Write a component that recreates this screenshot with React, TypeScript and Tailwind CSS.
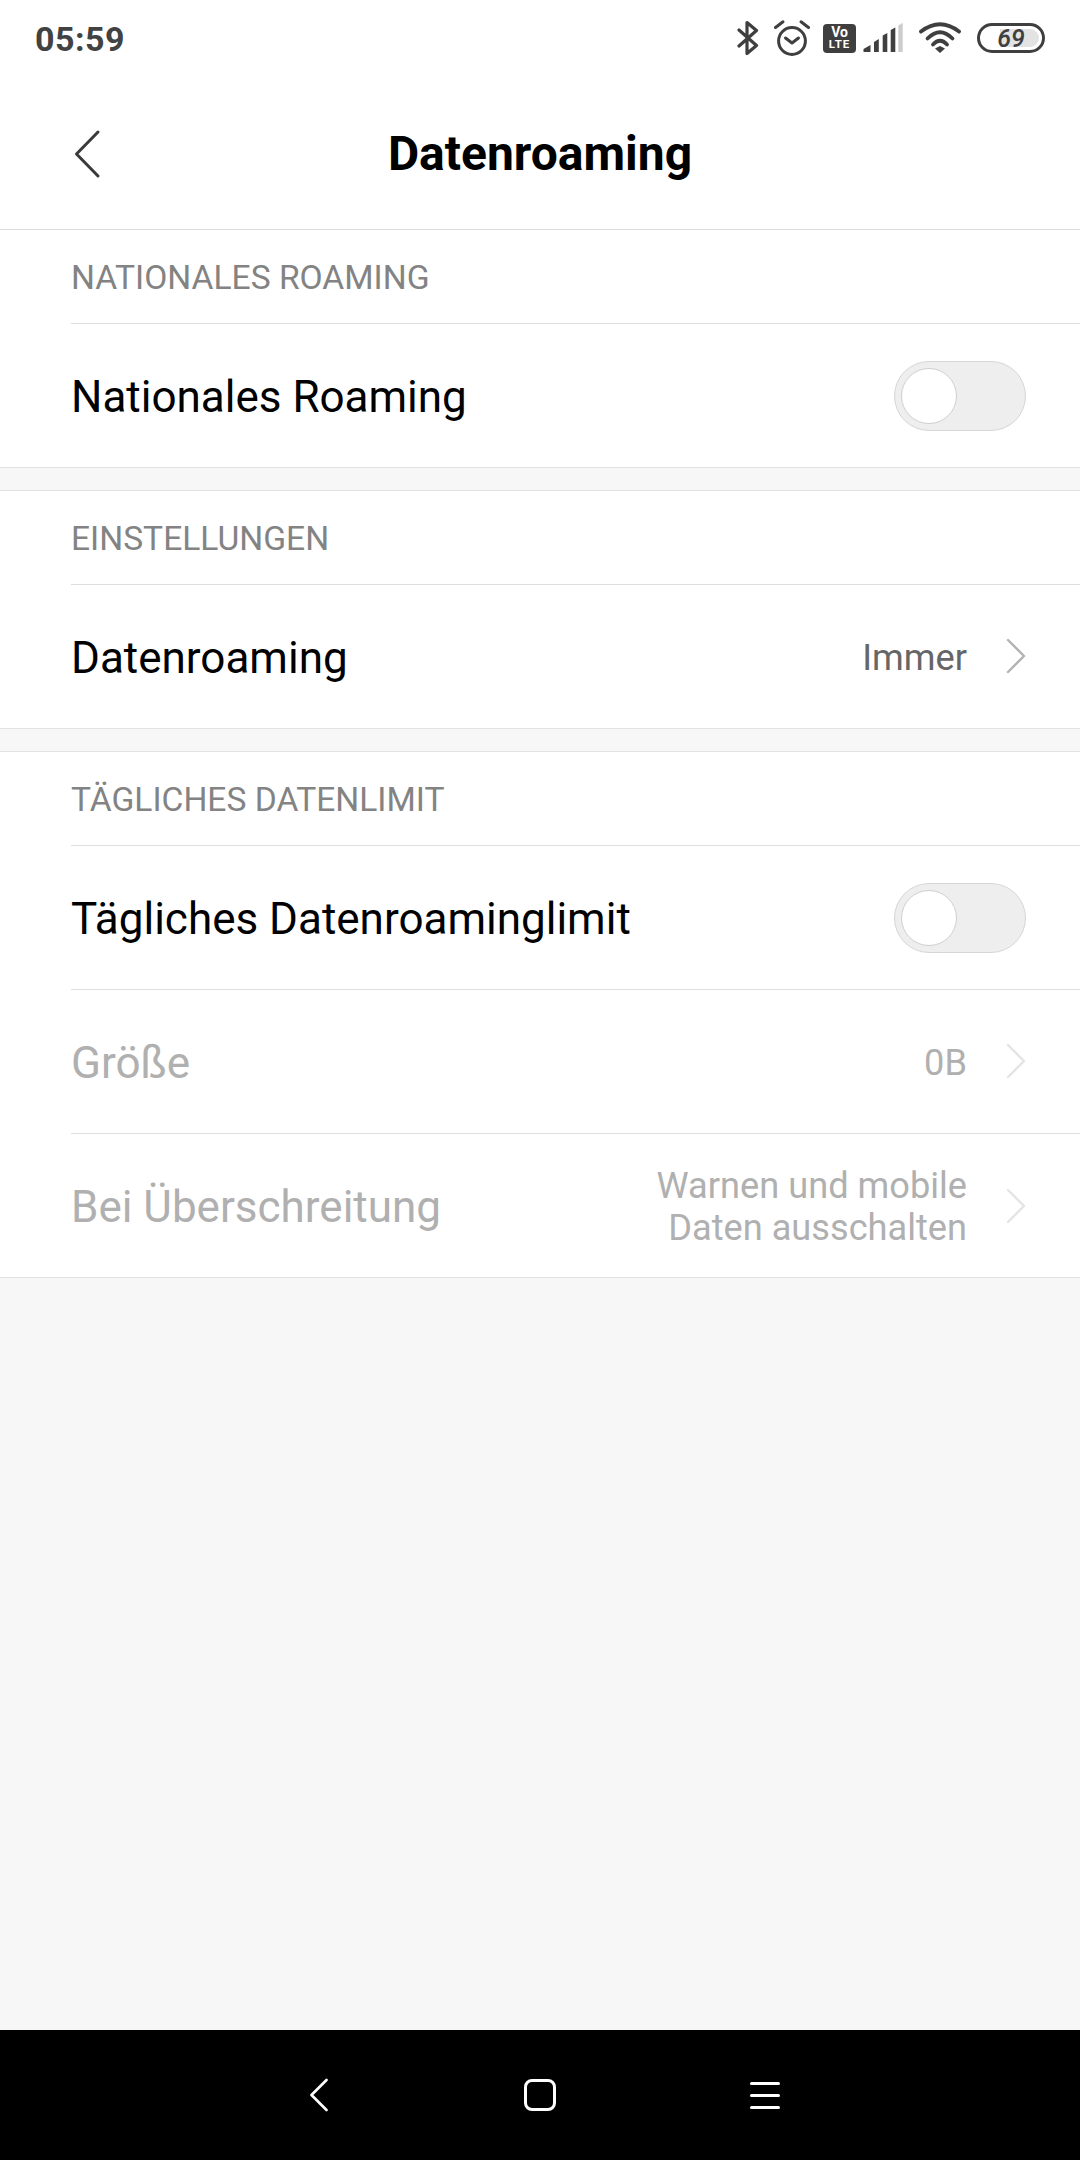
import React from 'react';

function Chevron({ color }: { color: string }) {
  return (
    <svg width="20" height="36" viewBox="0 0 20 36" fill="none" className="ml-[39px] shrink-0">
      <path d="M2 2 L18 18 L2 34" stroke={color} strokeWidth="2.4" strokeLinecap="round" strokeLinejoin="round" />
    </svg>
  );
}

function Toggle() {
  return (
    <div className="w-[132px] h-[70px] mt-[1px] rounded-full bg-[#eeeeee] border border-[#d6d6d6] flex items-center pl-[6px]">
      <div className="w-[56px] h-[56px] rounded-full bg-white border border-[#cfcfcf]" />
    </div>
  );
}

function SectionHeader({ text }: { text: string }) {
  return (
    <div className="h-[94px] ml-[71px] border-b border-[#dedede] flex items-center pt-[4px] text-[33.6px] text-[#838383]">
      {text}
    </div>
  );
}

function Row({
  title,
  disabled,
  last,
  children,
}: {
  title: string;
  disabled?: boolean;
  last?: boolean;
  children: React.ReactNode;
}) {
  return (
    <div className={last ? 'h-[143px] ml-[71px] flex items-center justify-between pr-[54px]' : 'h-[144px] ml-[71px] border-b border-[#dedede] flex items-center justify-between pr-[54px]'}>
      <span className={disabled ? 'pt-[3px] text-[44px] text-[#b0b0b0]' : 'pt-[3px] text-[44px] text-black'}>{title}</span>
      <div className="flex items-center">{children}</div>
    </div>
  );
}

function StatusIcons() {
  return (
    <div className="flex items-center">
      {/* bluetooth */}
      <svg width="22" height="36" viewBox="0 0 22 36" fill="none" className="mr-[15px]">
        <path d="M2 10 L19.5 25.5 L10 33.5 V2.5 L19.5 10.5 L2 26" stroke="#3f3f3f" strokeWidth="3.2" strokeLinecap="round" strokeLinejoin="round" />
      </svg>
      {/* alarm */}
      <svg width="36" height="36" viewBox="0 0 36 36" fill="none" className="mr-[13px]">
        <circle cx="18" cy="21" r="13.4" stroke="#3f3f3f" strokeWidth="3" />
        <path d="M11.5 18 L18 23 L24.5 18" stroke="#3f3f3f" strokeWidth="3" strokeLinecap="round" strokeLinejoin="round" />
        <path d="M1.5 7.5 L9 1.8 M34.5 7.5 L27 1.8" stroke="#3f3f3f" strokeWidth="3" strokeLinecap="round" />
      </svg>
      {/* volte */}
      <div className="w-[33px] h-[29px] rounded-[4px] bg-[#3f3f3f] flex flex-col items-center justify-center text-white font-bold mr-[7px]">
        <span className="text-[14px] leading-[13px]">Vo</span>
        <span className="text-[11.5px] leading-[11px] tracking-[1px]">LTE</span>
      </div>
      {/* signal */}
      <svg width="40" height="30" viewBox="0 0 40 30" className="mr-[16px]">
        <path d="M0.5 29 V26 L7.5 22 V29 Z" fill="#3f3f3f" />
        <path d="M11 29 V19 L15.8 16 V29 Z" fill="#3f3f3f" />
        <path d="M19.7 29 V12.5 L24.3 10 V29 Z" fill="#3f3f3f" />
        <path d="M27.7 29 V7 L32.3 4.5 V29 Z" fill="#3f3f3f" />
        <path d="M35.3 29 V2.5 L39.7 0 V29 Z" fill="#cccccc" />
      </svg>
      {/* wifi */}
      <svg width="42" height="32" viewBox="0 0 42 32" fill="none" className="mr-[16px]">
        <path d="M2 9.5 Q21 -5 40 9.5" stroke="#3f3f3f" strokeWidth="3.8" strokeLinecap="round" />
        <path d="M8.5 16.5 Q21 4 33.5 16.5" stroke="#3f3f3f" strokeWidth="3.8" strokeLinecap="round" />
        <path d="M14 22.5 Q21 15 28 22.5" stroke="#3f3f3f" strokeWidth="3.8" strokeLinecap="round" />
        <path d="M16 26.5 L21 24 L26 26.5 L21 31 Z" fill="#3f3f3f" />
      </svg>
      {/* battery */}
      <div className="relative w-[68px] h-[30px] rounded-full border-[3px] border-[#3f3f3f] flex items-center justify-center">
        <div className="absolute left-[20px] right-[3px] top-[3px] bottom-[3px] rounded-r-full bg-[#e3e3e3]" />
        <span className="relative text-[25px] font-medium leading-none italic text-[#3f3f3f]">69</span>
      </div>
    </div>
  );
}

export default function App() {
  return (
    <div className="w-[1080px] h-[2160px] flex flex-col bg-[#f7f7f7] font-['Roboto',sans-serif] overflow-hidden">
      <div className="bg-white border-b border-[#dcdcdc] h-[230px] flex flex-col">
        <div className="h-[76px] flex items-center justify-between pl-[35px] pr-[35px]">
          <span className="pt-[2px] text-[34px] font-bold text-[#424242] tracking-[0.5px]">05:59</span>
          <StatusIcons />
        </div>
        <div className="relative flex-1 flex items-center justify-center pt-[3px]">
          <svg width="28" height="50" viewBox="0 0 28 50" fill="none" className="absolute left-[74px] top-[53px]">
            <path d="M24 3 L2.5 25 L24 47" stroke="#3a3a3a" strokeWidth="3" strokeLinecap="round" strokeLinejoin="round" />
          </svg>
          <span className="text-[48px] font-bold text-black">Datenroaming</span>
        </div>
      </div>

      <div className="bg-white border-b border-[#e2e2e2]">
        <SectionHeader text="NATIONALES ROAMING" />
        <Row title="Nationales Roaming" last>
          <Toggle />
        </Row>
      </div>

      <div className="bg-white mt-[22px] border-y border-[#e2e2e2]">
        <SectionHeader text="EINSTELLUNGEN" />
        <Row title="Datenroaming" last>
          <span className="pt-[4px] text-[36.2px] text-[#666666]">Immer</span>
          <Chevron color="#b3b3b3" />
        </Row>
      </div>

      <div className="bg-white mt-[22px] border-y border-[#e2e2e2]">
        <SectionHeader text="TÄGLICHES DATENLIMIT" />
        <Row title="Tägliches Datenroaminglimit">
          <Toggle />
        </Row>
        <Row title="Größe" disabled>
          <span className="pt-[3px] text-[36.2px] text-[#b0b0b0]">0B</span>
          <Chevron color="#e4e4e4" />
        </Row>
        <Row title="Bei Überschreitung" disabled last>
          <span className="pt-[2px] text-[36.2px] leading-[42px] text-right text-[#b0b0b0]">
            Warnen und mobile
            <br />
            Daten ausschalten
          </span>
          <Chevron color="#e4e4e4" />
        </Row>
      </div>

      <div className="flex-1" />

      <div className="h-[130px] bg-black flex items-center justify-center pl-[10px]">
        <div className="flex items-center">
          <svg width="18" height="34" viewBox="0 0 18 34" fill="none" className="mr-[196px]">
            <path d="M16.5 2 L1.5 17 L16.5 32" stroke="white" strokeWidth="2.6" strokeLinecap="round" strokeLinejoin="round" />
          </svg>
          <div className="w-[32px] h-[32px] rounded-[8px] border-[3px] border-white mr-[194px]" />
          <div className="w-[30px] h-[27px] flex flex-col justify-between">
            <div className="h-[3px] bg-white rounded-full" />
            <div className="h-[3px] bg-white rounded-full" />
            <div className="h-[3px] bg-white rounded-full" />
          </div>
        </div>
      </div>
    </div>
  );
}
